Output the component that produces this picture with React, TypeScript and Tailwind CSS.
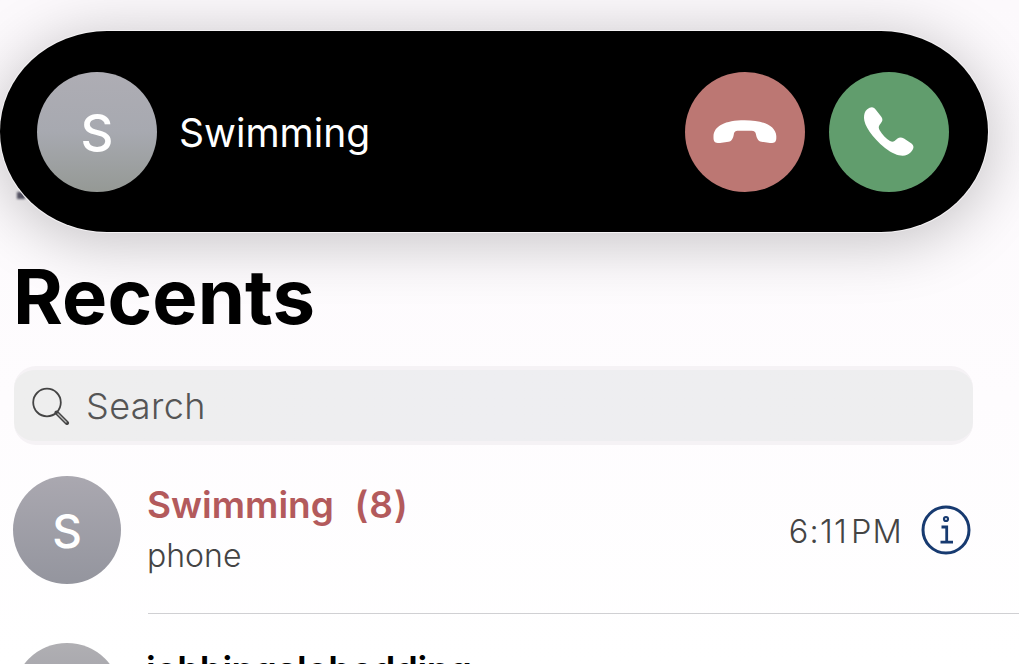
import React from 'react';

interface AvatarProps {
  letter?: string;
  className: string;
}

const Avatar: React.FC<AvatarProps> = ({ letter, className }) => (
  <div className={`flex shrink-0 items-center justify-center rounded-full pt-[3px] font-medium text-white ${className}`}>
    {letter}
  </div>
);

const DeclineIcon = () => (
  <svg width="64" height="26" viewBox="0 0 64 26" fill="#fff">
    <path d="M.500 17C1 7 12 1.200 31.500 1.200S62.500 7 63.300 17V19C63.300 23 61.500 24.200 57 24L48.500 22.800C45 22 43.800 19.500 43 15.500C42.500 13 41.500 11.800 38.500 11.800H25.500C22 11.800 21.200 13 20.800 15.500C20 19.500 19 22 15.500 22.800L7 24C2.500 24.200 .500 23 .500 19Z" />
  </svg>
);

const AcceptIcon = () => (
  <svg width="52" height="52" viewBox="0 0 52 52" fill="#fff">
    <path d="M4 3.500C8 .500 10.500 .500 13 4L18.500 11C20 13.500 19.500 15 18 17L16.500 19C15.500 20.500 15.500 22 16.500 24C19.500 29 23 32.500 27 35C29 36 30 36 31.500 35L34.500 32.500C36.500 31 38.500 31 41 32.600L48.500 37.500C51.500 40 51 43 47.500 46.500C43 51.500 33.500 51 22 42C9 31.500 1 19 1 12C1 8 1.800 5.500 4 3.500Z" />
  </svg>
);

const SearchIcon = () => (
  <svg width="38" height="38" viewBox="0 0 38 38" fill="none" stroke="#444" strokeWidth="1.800">
    <circle cx="15" cy="15.500" r="13.800" />
    <path d="M24.500 25.500L35 36" strokeWidth="4" strokeLinecap="round" />
    <path d="M25.500 26.500L34.500 35.500" stroke="#bbb" strokeWidth="1.200" />
  </svg>
);

const InfoIcon = () => (
  <svg width="50" height="50" viewBox="0 0 50 50" fill="none" stroke="#173a70" strokeWidth="3">
    <circle cx="25" cy="25" r="23" />
    <circle cx="25" cy="14" r="2" strokeWidth="2.200" />
    <path d="M20.500 22H25.700V37M19.500 37.200H32" strokeWidth="2.800" />
  </svg>
);

const IncomingCall = () => (
  <div className="relative mt-[31px] flex h-[201px] w-[988px] shrink-0 items-center rounded-[107px/100.5px] bg-black pl-[37px] pr-[39px] shadow-[0_0_0_1px_#f4f2f4,0_8px_60px_4px_rgba(0,0,0,0.22)]">
    <Avatar letter="S" className="h-[120px] w-[120px] bg-linear-to-b from-[#aeadb4] via-[#a7a9b0] to-[#959995] text-[51px]" />
    <div className="ml-[22px] flex-1 pt-[3px] text-[39px]">Swimming</div>
    <div className="flex gap-6">
      <button className="flex h-[120px] w-[120px] items-center justify-center rounded-full bg-[#bc7773]">
        <DeclineIcon />
      </button>
      <button className="flex h-[120px] w-[120px] items-center justify-center rounded-full bg-[#619d6d]">
        <AcceptIcon />
      </button>
    </div>
  </div>
);

export default function App() {
  return (
    <div className="relative flex h-[664px] w-[1019px] flex-col overflow-hidden bg-linear-to-b from-[#fcf9fc] via-[#fefcfe] via-60% to-white font-['Inter',sans-serif] text-white">
      {/* edge of the nav bar button left under the banner */}
      <div className="absolute left-[17px] top-[192px] h-[7px] w-[8px] bg-[#5c5a6c] blur-[1px]" />
      <IncomingCall />

      <h1 className="relative ml-[13px] mt-[20px] h-[88px] whitespace-nowrap text-[76px] leading-[88px] font-bold tracking-[0.100px] text-black">Recents</h1>

      <div className="ml-[14px] mt-[26px] flex h-[79px] w-[959px] shrink-0 items-center rounded-[22px] border-y-4 border-[#f5f2f5] bg-linear-to-r from-[#eeeeee] via-[#eeeef1] to-[#eeeeef] pl-[18px] text-[#555]">
        <SearchIcon />
        <span className="ml-[16px] pt-px text-[36px] font-light tracking-[0.400px]">Search</span>
      </div>

      <div className="ml-[13px] mt-[31px] flex h-[108px] shrink-0 items-center">
        <Avatar letter="S" className="h-[108px] w-[108px] bg-linear-to-b from-[#aaa8b0] to-[#94959e] text-[46px]" />
        <div className="ml-[26px] flex-1">
          <div className="whitespace-pre text-[37px] leading-[52px] font-semibold text-[#b35a5c]">Swimming  <span className="ml-[2px] tracking-[1px]">(8)</span></div>
          <div className="text-[32px] leading-[50px] font-light text-[#444]">phone</div>
        </div>
        <span className="mr-[18px] pt-[4px] text-[32.500px] font-light tracking-[1.200px] text-[#444]">
          6:11<span className="ml-[3px]">PM</span>
        </span>
        <div className="mr-12">
          <InfoIcon />
        </div>
      </div>

      <div className="ml-[148px] mt-[29px] h-px shrink-0 bg-[#d0d0d3]" />

      <div className="ml-[13px] mt-[29px] flex h-[108px] shrink-0">
        <Avatar className="h-[108px] w-[108px] bg-linear-to-b from-[#b0afb3] to-[#94959e]" />
        <div className="ml-[25px] whitespace-nowrap pt-px text-[37px] leading-[52px] font-semibold tracking-[-0.500px] text-black">jobbingalobedding</div>
      </div>
    </div>
  );
}
